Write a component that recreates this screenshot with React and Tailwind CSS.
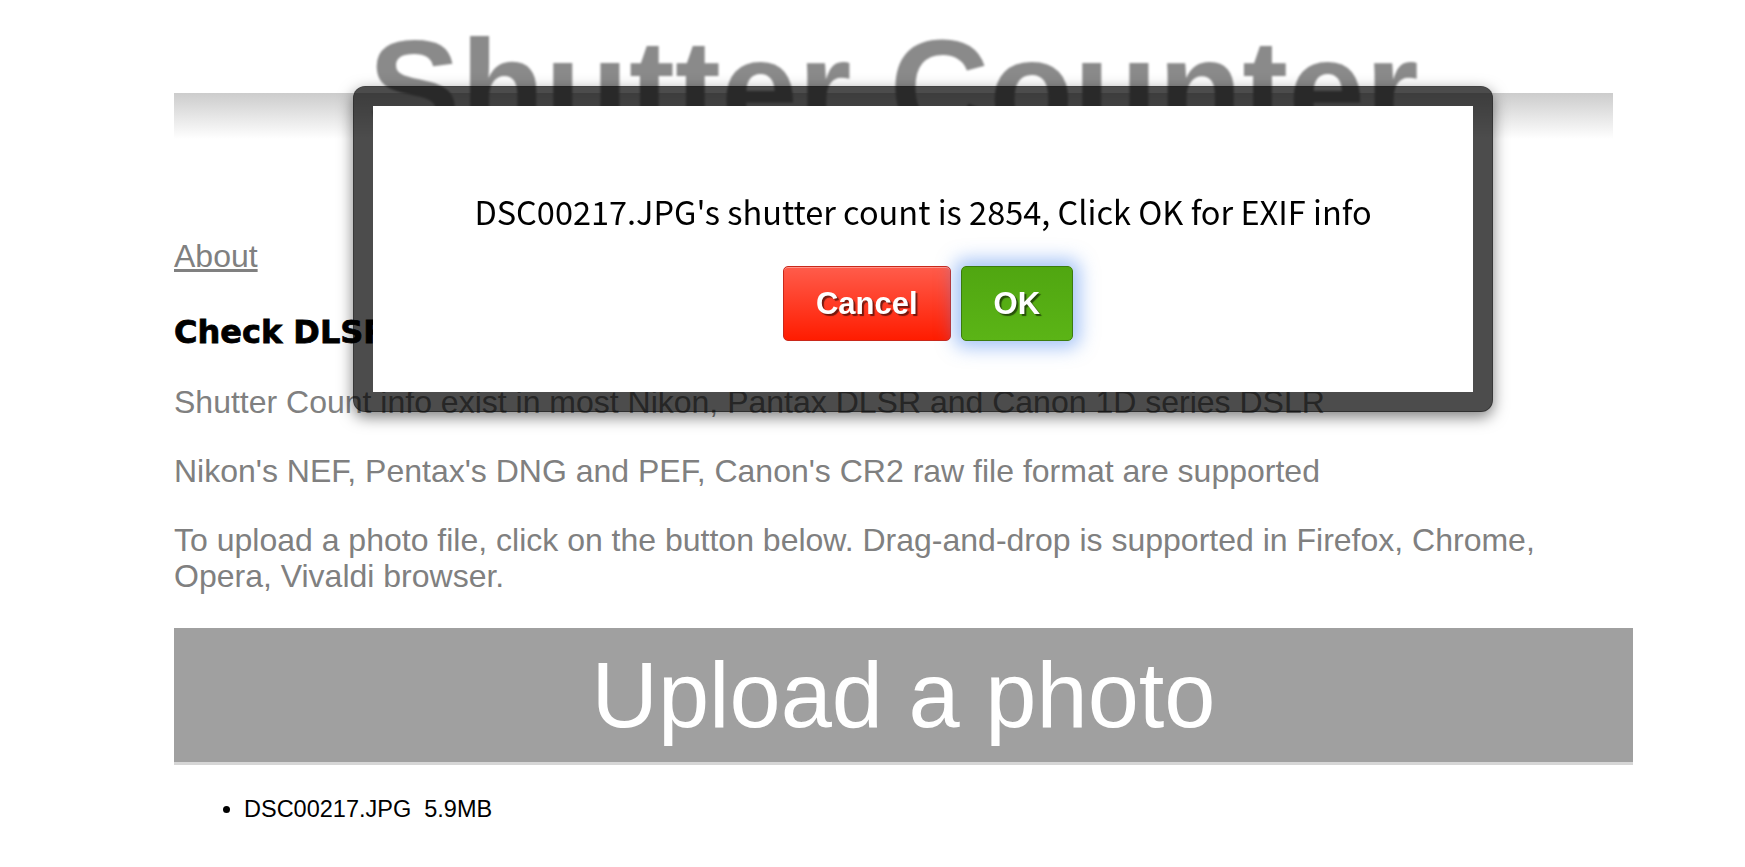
import React from 'react';

const paragraphs = [
  'Shutter Count info exist in most Nikon, Pantax DLSR and Canon 1D series DSLR',
  "Nikon's NEF, Pentax's DNG and PEF, Canon's CR2 raw file format are supported",
  'To upload a photo file, click on the button below. Drag-and-drop is supported in Firefox, Chrome, Opera, Vivaldi browser.',
];

const ResultDialog = () => (
  <div className="fixed left-[353px] top-[86px] w-[1140px] h-[326px] border-[20px] border-black/70 rounded-[12px] bg-white bg-clip-padding shadow-[0_5px_15px_rgba(0,0,0,0.5)]">
    <div className="pt-[85px] text-center">
      <p className="font-['Noto_Sans_CJK_JP','Noto_Sans',sans-serif] text-[32.5px] leading-[40px] text-black">
        DSC00217.JPG's shutter count is 2854, Click OK for EXIF info
      </p>
      <div className="mt-[35px] pl-[10px] flex justify-center gap-[10px]">
        <button className="px-8 py-[18px] text-[31px] leading-[37px] font-bold text-white rounded-[5px] border border-[#c9281a] bg-[linear-gradient(to_bottom,#ff5c4b,#ff1c00)] shadow-[inset_0_1px_0_rgba(255,255,255,0.35)] [text-shadow:2px_2px_1px_rgba(0,0,0,0.55)]">
          Cancel
        </button>
        <button className="px-8 py-[18px] text-[31px] leading-[37px] font-bold text-white rounded-[5px] border border-[#3b7c0e] bg-[linear-gradient(to_bottom,#50a611,#5bb416)] shadow-[0_0_18px_7px_rgba(80,140,240,0.5)] [text-shadow:2px_2px_1px_rgba(0,0,0,0.55)]">
          OK
        </button>
      </div>
    </div>
  </div>
);

export default function App() {
  return (
    <div className="min-h-screen bg-white font-['Liberation_Sans',Arial,sans-serif]">
      <div className="ml-[174px] w-[1459px]">
        {/* title band */}
        <header className="w-[1439px] h-[139px] pt-[19px] text-center bg-[linear-gradient(to_bottom,#cccccc,#ffffff)] bg-no-repeat bg-bottom bg-[length:100%_46px]">
          <h1 className="text-[138px] leading-none font-bold text-[#8a8a8a] blur-[0.8px]">Shutter Counter</h1>
        </header>

        <div className="mt-[99px]">
          <a href="#" className="text-[32px] leading-[37px] text-[#808080] underline">About</a>
        </div>

        <h2 className="mt-[39px] font-['DejaVu_Sans',sans-serif] font-bold text-[32px] leading-[37px] text-black [-webkit-text-stroke:0.8px_black]">
          Check DLSR Shutter Count
        </h2>

        <div className="mt-[33px] flex flex-col gap-[33px]">
          {paragraphs.map((t) => (
            <p key={t} className="text-[32px] leading-[36px] text-[#808080]">{t}</p>
          ))}
        </div>

        <button className="mt-[34px] w-full pt-[15px] pb-[14px] bg-[#a0a0a0] border-b-[3px] border-[#d6d6d6] text-white text-[92px] leading-[105px]">
          Upload a photo
        </button>

        <ul className="mt-[27px] pl-[70px] list-disc text-[23.5px] text-black">
          <li className="whitespace-pre">DSC00217.JPG  5.9MB</li>
        </ul>
      </div>

      <ResultDialog />
    </div>
  );
}
